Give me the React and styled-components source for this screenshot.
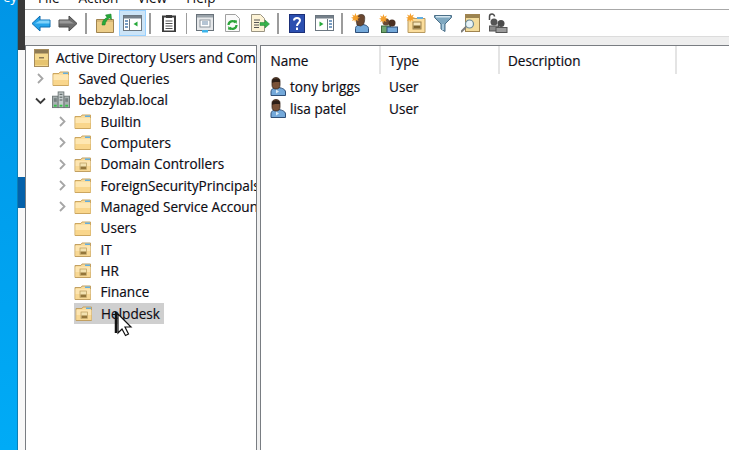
import React from 'react';
import styled, { createGlobalStyle } from 'styled-components';

const Global = createGlobalStyle`
  html, body { margin: 0; padding: 0; background: #fff; }
  body { font-family: "Open Sans", "Noto Sans", sans-serif; color: #111; }
`;

const Screen = styled.div`
  position: relative;
  display: flex;
  width: 729px;
  height: 450px;
  overflow: hidden;
`;

const Desktop = styled.div`
  width: 17px;
  flex: none;
  background: linear-gradient(#0095e6, #00abf6);
  border-right: 1px solid #0b7fb5;
  overflow: hidden;
  color: #fff;
  font-size: 13px;
  line-height: 12px;
  text-align: right;
  span { display: block; margin-top: -9px; }
`;

const Edge = styled.div`
  width: 7px;
  flex: none;
  display: flex;
  flex-direction: column;
  background: #f8f8f8;
`;

const EdgeTop = styled.div`
  height: 50px;
  background: #3a3a3a;
`;

const EdgeThumb = styled.div`
  height: 31px;
  margin-top: 127px;
  background: #0461aa;
`;

const Window = styled.div`
  flex: 1;
  min-width: 0;
  display: flex;
  flex-direction: column;
`;

const MenuBar = styled.div`
  height: 9px;
  flex: none;
  display: flex;
  gap: 19px;
  padding-left: 13px;
  overflow: hidden;
  border-bottom: 1.5px solid #a8a8a8;
  font-size: 13.6px;
  line-height: 18px;
  span { display: block; margin-top: -11px; }
`;

const ToolBar = styled.div`
  height: 26px;
  flex: none;
  display: flex;
  align-items: center;
  padding-left: 2px;
  border-bottom: 1px solid #dcdcdc;
`;

const Tool = styled.div`
  width: 27.5px;
  height: 26px;
  box-sizing: border-box;
  flex: none;
  display: flex;
  align-items: center;
  justify-content: center;
  background: ${p => (p.$active ? '#cce4f7' : 'transparent')};
  border: 1px solid ${p => (p.$active ? '#99d1ff' : 'transparent')};
`;

const Sep = styled.div`
  width: 1.5px;
  height: 21px;
  flex: none;
  margin: 0 4.5px 0 3px;
  background: #9c9c9c;
`;

const Band = styled.div`
  height: 8px;
  flex: none;
  background: #eeeeee;
`;

const Panes = styled.div`
  flex: 1;
  min-height: 0;
  display: flex;
  background: #f0f0f0;
`;

const TreePane = styled.div`
  width: 230px;
  flex: none;
  background: #fff;
  overflow: hidden;
  border: 1.5px solid #797d82;
  border-bottom: 0;
  padding-top: 1px;
`;

const ListPane = styled.div`
  flex: 1;
  margin-left: 3px;
  background: #fff;
  border-top: 1.5px solid #797d82;
  border-left: 1.5px solid #797d82;
`;

const TreeRow = styled.div`
  height: 21.33px;
  display: flex;
  align-items: center;
  white-space: nowrap;
  font-size: 13.6px;
  padding-left: ${p => p.$indent}px;
  text-shadow: -0.4px 0 rgba(150, 0, 40, 0.3), 0.4px 0 rgba(0, 150, 230, 0.3);
`;

const Twisty = styled.div`
  width: 17px;
  flex: none;
  display: flex;
  align-items: center;
`;

const NodeIcon = styled.div`
  width: 18px;
  height: 18px;
  flex: none;
  display: flex;
  align-items: center;
  justify-content: center;
`;

const NodeLabel = styled.span`
  flex: 1;
  min-width: 0;
  overflow: hidden;
  margin-left: ${p => p.$gap}px;
  padding-left: 5px;
  line-height: 20px;
`;

const Selected = styled.div`
  display: flex;
  align-items: center;
  height: 21px;
  padding-left: 1px;
  width: 89px;
  background: #cfcfcf;
`;

const Header = styled.div`
  height: 28px;
  display: flex;
  font-size: 13.6px;
  text-shadow: -0.4px 0 rgba(150, 0, 40, 0.3), 0.4px 0 rgba(0, 150, 230, 0.3);
`;

const Column = styled.div`
  width: ${p => p.$w}px;
  flex: none;
  box-sizing: border-box;
  padding-left: ${p => p.$pad}px;
  line-height: 29px;
  border-right: 2px solid #e4e4e4;
`;

const ListBody = styled.div`
  padding-top: 1px;
`;

const ListRow = styled.div`
  height: 22.5px;
  display: flex;
  align-items: center;
  padding-left: 9px;
  font-size: 13.6px;
  text-shadow: -0.4px 0 rgba(150, 0, 40, 0.3), 0.4px 0 rgba(0, 150, 230, 0.3);
`;

const ListName = styled.div`
  width: 99px;
  flex: none;
  margin-left: 4px;
`;

const Pointer = styled.svg`
  position: absolute;
  left: 114px;
  top: 311px;
`;

const Chevron = ({ open }) => (
  <svg width="11" height="11" viewBox="0 0 11 11">
    <path d={open ? 'M1 3.5l4.500 4.500 4.500-4.500' : 'M3 1l4.500 4.500-4.500 4.500'} fill="none" stroke={open ? '#3a3a3a' : '#a6a6a6'} strokeWidth="1.800" />
  </svg>
);

const Folder = () => (
  <svg width="18" height="17" viewBox="0 0 18 17">
    <path d="M1 3.500h6l1-1.500h8.500v13.500H1z" fill="#f9dc9c" stroke="#cca65f" />
    <rect x="11" y="2.500" width="5" height="1.500" fill="#63aee0" />
    <path d="M1.500 5h15v5h-15z" fill="#fee7b2" />
    <path d="M1.500 10h15v5h-15z" fill="#f9d68c" />
  </svg>
);

const OuFolder = () => (
  <svg width="18" height="17" viewBox="0 0 18 17">
    <path d="M1 3.500h6l1-1.500h8.500v13.500H1z" fill="#f9dc9c" stroke="#c2a062" />
    <rect x="11" y="2.500" width="5" height="1.500" fill="#63aee0" />
    <path d="M1.500 5h15v5h-15z" fill="#fde5b0" />
    <path d="M1.500 10h15v5h-15z" fill="#f8d894" />
    <rect x="6" y="7" width="6.500" height="6.500" fill="#f3e2b0" stroke="#b89a5c" strokeWidth="0.700" />
    <rect x="6.500" y="10.500" width="5.500" height="2.500" fill="#94763a" />
  </svg>
);

const RootIcon = () => (
  <svg width="15" height="18" viewBox="0 0 15 18">
    <rect x="0.500" y="0.500" width="14" height="17" fill="#f4d98f" stroke="#a68c5c" />
    <rect x="1" y="1" width="13" height="3.500" fill="#8d7a54" />
    <rect x="1" y="11" width="13" height="5" fill="#e6c470" />
    <rect x="5" y="8" width="5" height="1.500" fill="#8d7a54" />
  </svg>
);

const DomainIcon = () => (
  <svg width="19" height="18" viewBox="0 0 19 18">
    <rect x="0.500" y="5" width="6" height="12" fill="#a7b0b0" stroke="#6f7878" />
    <rect x="12.500" y="5" width="6" height="12" fill="#a7b0b0" stroke="#6f7878" />
    <rect x="6.500" y="0.500" width="6" height="16.500" fill="#c4cccc" stroke="#6f7878" />
    <path d="M2 8h3M2 10h3M8 3h3M8 6h3M8 9h3M14 8h3M14 10h3" stroke="#4c5555" />
    <rect x="2" y="14" width="3" height="2" fill="#35c24a" />
    <rect x="8" y="14" width="3" height="2" fill="#35c24a" />
    <rect x="14" y="14" width="3" height="2" fill="#35c24a" />
  </svg>
);

const UserIcon = () => (
  <svg width="16" height="19" viewBox="0 0 16 19">
    <path d="M1 18.500v-3.500c0-2.500 2-4.500 6-4.500s8.500 1.500 8.500 4.500v3.500z" fill="#74a9da" stroke="#2f4f78" />
    <path d="M2 8V4c0-2.500 2-3.500 4-3.500s4 1 4 3.500v4c0 2.500-1.500 4-4 4s-4-1.500-4-4z" fill="#7a5238" stroke="#3a2a20" strokeWidth="0.800" />
    <path d="M2 6V3.500C2.500 1 9.500 0 10 3.500V5C7 5 4 4.500 2 6z" fill="#2e2018" />
    <path d="M6 12.500l3 2-3 2z" fill="#dcebf6" />
  </svg>
);

const Spark = () => (
  <path d="M4.500 0l.8 2.700L8 1.500 6.500 4 9 4.800l-2.500.9L7.500 8 5 7 4 9.500 3.500 7 1 8l1.200-2.300L0 4.800 2.500 4 1 1.500l2.500 1.200z" fill="#f5a02c" />
);

const Back = () => (
  <svg width="20" height="17" viewBox="0 0 20 17">
    <path d="M1 8.500L9 1v4h10v7H9v4z" fill="#26a4ea" stroke="#0e6cb0" />
    <path d="M9 5.500h9.500v3H4z" fill="#7fd2fa" />
  </svg>
);

const Forward = () => (
  <svg width="20" height="17" viewBox="0 0 20 17">
    <path d="M19 8.500L11 1v4H1v7h10v4z" fill="#6e6e6e" stroke="#4b4b4b" />
    <path d="M11 5.500H1.500v3H16z" fill="#9a9a9a" />
  </svg>
);

const UpLevel = () => (
  <svg width="18" height="20" viewBox="0 0 18 20">
    <path d="M.5 6.500h17v13H.5z" fill="#d8b878" stroke="#a08450" />
    <path d="M1 9h16v10H1z" fill="#eccd88" />
    <path d="M6 12c0-4 2-6 5-7.500L9.500 2 15 1l.5 5.500-2-1.500c-2 1.200-4 3.500-4.500 7z" fill="#27a93a" stroke="#157a25" strokeWidth="0.500" />
  </svg>
);

const ShowTree = () => (
  <svg width="19" height="16" viewBox="0 0 19 16">
    <rect x="0.500" y="0.500" width="18" height="15" fill="#fff" stroke="#6b7680" />
    <rect x="1" y="1" width="17" height="2.500" fill="#75808a" />
    <path d="M6.500 4v11" stroke="#6b7680" />
    <path d="M2 6h3M2 9h3M2 12h3" stroke="#4f7fb0" strokeWidth="1.500" />
    <path d="M14.500 6.500v5l-4-2.500z" fill="#27a93a" />
  </svg>
);

const Clipboard = () => (
  <svg width="14" height="17" viewBox="0 0 14 17">
    <rect x="1" y="1.500" width="12" height="15" fill="#fff" stroke="#3c3c3c" strokeWidth="2" />
    <rect x="4" y="0" width="6" height="3" fill="#3c3c3c" />
    <path d="M3.500 6h7M3.500 8.500h7M3.500 11h7M3.500 13.500h7" stroke="#555" />
  </svg>
);

const Props = () => (
  <svg width="18" height="19" viewBox="0 0 18 19">
    <rect x="0.500" y="0.500" width="17" height="16" fill="#e6e8ea" stroke="#69727a" />
    <rect x="1" y="1" width="16" height="2.500" fill="#9aa3aa" />
    <rect x="4" y="6" width="10" height="7" fill="#fff" stroke="#8b949c" />
    <path d="M6 8h6M6 10h6" stroke="#6d8aa8" />
    <rect x="6" y="16" width="6" height="2.500" fill="#3db4ea" />
  </svg>
);

const Refresh = () => (
  <svg width="15" height="18" viewBox="0 0 15 18">
    <path d="M.5.500h10l4 4v13H.5z" fill="#fafafa" stroke="#a0a0a0" />
    <path d="M3.500 11a4 4 0 0 1 7-2.500M11.500 11a4 4 0 0 1-7 2.500" fill="none" stroke="#2ca53a" strokeWidth="2.200" />
    <path d="M8.500 6l3.500.5-.5 3.500zM6.500 16L3 15.500l.5-3.500z" fill="#2ca53a" />
  </svg>
);

const ExportList = () => (
  <svg width="19" height="18" viewBox="0 0 19 18">
    <path d="M.5.500h9l4 4v13H.5z" fill="#fdf3d6" stroke="#9a9482" />
    <path d="M3 6h6M3 8.500h5M3 11h5M3 13.500h5" stroke="#555" />
    <path d="M9 8.500h5V6l4.500 4-4.500 4v-2.500H9z" fill="#37b24a" stroke="#1d8a32" strokeWidth="0.500" />
  </svg>
);

const Help = () => (
  <svg width="16" height="19" viewBox="0 0 16 19">
    <rect x="0.500" y="0.500" width="15" height="18" fill="#2b4fb0" stroke="#1b2f78" />
    <path d="M5 6.500c0-3.500 6-3.500 6 0 0 2.500-3 2.500-3 5.500" fill="none" stroke="#fff" strokeWidth="2" />
    <rect x="7" y="13.500" width="2" height="2.500" fill="#fff" />
  </svg>
);

const ShowAction = () => (
  <svg width="19" height="16" viewBox="0 0 19 16">
    <rect x="0.500" y="0.500" width="18" height="15" fill="#fff" stroke="#6b7680" />
    <rect x="1" y="1" width="17" height="2.500" fill="#75808a" />
    <path d="M12.500 4v11" stroke="#6b7680" />
    <path d="M14 6h3M14 9h3M14 12h3" stroke="#4f7fb0" strokeWidth="1.500" />
    <path d="M4.500 6.500v5l4-2.500z" fill="#27a93a" />
  </svg>
);

const NewUser = () => (
  <svg width="19" height="20" viewBox="0 0 19 20">
    <g transform="translate(4 1)">
      <path d="M.5 18.500v-4c0-2.500 2.500-4 6-4s7 1.500 7 4v4z" fill="#74a9da" stroke="#2f4f78" />
      <path d="M2 11c-1-4-1-10 3.500-10.500S10 3 9.500 7 7 11.500 5.500 12z" fill="#6a4730" stroke="#2e2018" strokeWidth="0.600" />
    </g>
    <Spark />
  </svg>
);

const NewGroup = () => (
  <svg width="19" height="19" viewBox="0 0 19 19">
    <g transform="translate(1 3)">
      <rect x="1.500" y="9" width="9" height="6.500" fill="#6fa56f" stroke="#3c6a3c" />
      <circle cx="6" cy="5" r="3.500" fill="#6a4a34" />
    </g>
    <g transform="translate(7 5)">
      <rect x="1" y="8" width="10.500" height="5.500" fill="#74a9da" stroke="#2f4f78" />
      <circle cx="6" cy="4" r="3.500" fill="#4a3022" />
    </g>
    <Spark />
  </svg>
);

const NewOu = () => (
  <svg width="20" height="20" viewBox="0 0 20 20">
    <path d="M2 5.500h17v14H2z" fill="#fbdd9c" stroke="#b89a60" />
    <rect x="11" y="4" width="6" height="2" fill="#63aee0" />
    <rect x="7" y="9" width="8" height="7" fill="#f5e6bd" stroke="#9c8048" />
    <rect x="7.500" y="12.500" width="7" height="3" fill="#7e6430" />
    <Spark />
  </svg>
);

const Filter = () => (
  <svg width="18" height="18" viewBox="0 0 18 18">
    <path d="M.5 1.500h17v2L11 10v7.500L7 15v-5L.5 3.500z" fill="#7fa8c0" stroke="#4b6f88" />
    <path d="M2 2h14v1.500H2z" fill="#d4e6f0" />
    <path d="M8 10h2v6H8z" fill="#a9cbde" />
  </svg>
);

const FindIcon = () => (
  <svg width="19" height="19" viewBox="0 0 19 19">
    <rect x="4.500" y="0.500" width="14" height="17" fill="#f3dc9c" stroke="#a08450" />
    <rect x="5" y="1" width="13" height="3" fill="#9c8450" />
    <path d="M0 18l5-5" stroke="#7b7b7b" strokeWidth="2" />
    <circle cx="8.500" cy="10" r="4" fill="#e6f2f6" stroke="#6d8a96" strokeWidth="1.200" />
  </svg>
);

const Delegate = () => (
  <svg width="20" height="20" viewBox="0 0 20 20">
    <path d="M1.500 7V3.500a2.500 2.500 0 0 1 5 0" fill="none" stroke="#4d4d4d" strokeWidth="1.500" />
    <circle cx="6" cy="9" r="3.500" fill="#555" />
    <rect x="1.500" y="13" width="9" height="5" fill="#8a8a8a" stroke="#555" />
    <circle cx="13" cy="10.500" r="3.500" fill="#4b4b4b" />
    <rect x="8" y="14.500" width="11" height="5" fill="#9c9c9c" stroke="#555" />
  </svg>
);

const nodes = [
  { indent: 9, chevron: true, icon: <Folder />, label: 'Saved Queries' },
  { indent: 9, chevron: true, open: true, icon: <DomainIcon />, label: 'bebzylab.local' },
  { indent: 31, chevron: true, icon: <Folder />, label: 'Builtin' },
  { indent: 31, chevron: true, icon: <Folder />, label: 'Computers' },
  { indent: 31, chevron: true, icon: <OuFolder />, label: 'Domain Controllers' },
  { indent: 31, chevron: true, icon: <Folder />, label: 'ForeignSecurityPrincipals' },
  { indent: 31, chevron: true, icon: <Folder />, label: 'Managed Service Accounts' },
  { indent: 31, icon: <Folder />, label: 'Users' },
  { indent: 31, icon: <OuFolder />, label: 'IT' },
  { indent: 31, icon: <OuFolder />, label: 'HR' },
  { indent: 31, icon: <OuFolder />, label: 'Finance' },
];

function Toolstrip() {
  return (
    <ToolBar>
      <Tool><Back /></Tool>
      <Tool><Forward /></Tool>
      <Sep />
      <Tool><UpLevel /></Tool>
      <Tool $active><ShowTree /></Tool>
      <Sep />
      <Tool><Clipboard /></Tool>
      <Sep />
      <Tool><Props /></Tool>
      <Tool><Refresh /></Tool>
      <Tool><ExportList /></Tool>
      <Sep />
      <Tool><Help /></Tool>
      <Tool><ShowAction /></Tool>
      <Sep />
      <Tool><NewUser /></Tool>
      <Tool><NewGroup /></Tool>
      <Tool><NewOu /></Tool>
      <Tool><Filter /></Tool>
      <Tool><FindIcon /></Tool>
      <Tool><Delegate /></Tool>
    </ToolBar>
  );
}

export default function App() {
  return (
    <Screen>
      <Global />
      <Desktop><span>ey</span></Desktop>
      <Edge>
        <EdgeTop />
        <EdgeThumb />
      </Edge>
      <Window>
        <MenuBar>
          <span>File</span>
          <span>Action</span>
          <span>View</span>
          <span>Help</span>
        </MenuBar>
        <Toolstrip />
        <Band />
        <Panes>
          <TreePane>
            <TreeRow $indent={6}>
              <NodeIcon><RootIcon /></NodeIcon>
              <NodeLabel $gap={1}>Active Directory Users and Computers</NodeLabel>
            </TreeRow>
            {nodes.map(n => (
              <TreeRow key={n.label} $indent={n.indent}>
                <Twisty>{n.chevron && <Chevron open={n.open} />}</Twisty>
                <NodeIcon>{n.icon}</NodeIcon>
                <NodeLabel $gap={3.5}>{n.label}</NodeLabel>
              </TreeRow>
            ))}
            <TreeRow $indent={47.5}>
              <Selected>
                <NodeIcon><OuFolder /></NodeIcon>
                <NodeLabel $gap={3.5}>Helpdesk</NodeLabel>
              </Selected>
            </TreeRow>
          </TreePane>
          <ListPane>
            <Header>
              <Column $w={120} $pad={9.5}>Name</Column>
              <Column $w={119} $pad={8}>Type</Column>
              <Column $w={177} $pad={8}>Description</Column>
            </Header>
            <ListBody>
              <ListRow><UserIcon /><ListName>tony briggs</ListName>User</ListRow>
              <ListRow><UserIcon /><ListName>lisa patel</ListName>User</ListRow>
            </ListBody>
          </ListPane>
        </Panes>
      </Window>
      <Pointer width="19" height="27" viewBox="0 0 19 27">
        <path d="M2 1v21" stroke="#111" strokeWidth="2.500" />
        <path d="M4 3l13 13h-6l3.500 7-3 1.500L8 18l-4 4z" fill="#fff" stroke="#111" strokeWidth="1.200" />
      </Pointer>
    </Screen>
  );
}
